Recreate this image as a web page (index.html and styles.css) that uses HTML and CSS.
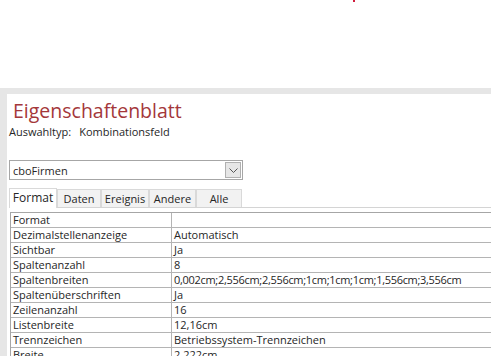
FILE: index.html
```html
<!DOCTYPE html>
<html lang="de">
<head>
<meta charset="utf-8">
<link rel="stylesheet" href="styles.css">
</head>
<body>
<div class="top"><span class="dot"></span></div>
<div class="sheet">
  <div class="panel">
    <h1 class="title">Eigenschaftenblatt</h1>
    <div class="subtitle"><span>Auswahltyp:</span><span>Kombinationsfeld</span></div>
    <div class="combo">
      <span class="combo-text">cboFirmen</span>
      <span class="combo-btn">
        <svg width="9" height="5" viewBox="0 0 9 5"><path d="M0.5 0.5 L4.5 4.5 L8.5 0.5" fill="none" stroke="#555" stroke-width="1"/></svg>
      </span>
    </div>
    <div class="tabs">
      <div class="tab active">Format</div>
      <div class="tab">Daten</div>
      <div class="tab">Ereignis</div>
      <div class="tab">Andere</div>
      <div class="tab">Alle</div>
    </div>
    <div class="grid">
      <div class="row"><div class="k">Format</div><div class="v"></div></div>
      <div class="row"><div class="k">Dezimalstellenanzeige</div><div class="v">Automatisch</div></div>
      <div class="row"><div class="k">Sichtbar</div><div class="v">Ja</div></div>
      <div class="row"><div class="k">Spaltenanzahl</div><div class="v">8</div></div>
      <div class="row"><div class="k">Spaltenbreiten</div><div class="v num">0,002cm;2,556cm;2,556cm;1cm;1cm;1cm;1,556cm;3,556cm</div></div>
      <div class="row"><div class="k">Spaltenüberschriften</div><div class="v">Ja</div></div>
      <div class="row"><div class="k">Zeilenanzahl</div><div class="v">16</div></div>
      <div class="row"><div class="k">Listenbreite</div><div class="v">12,16cm</div></div>
      <div class="row"><div class="k">Trennzeichen</div><div class="v">Betriebssystem-Trennzeichen</div></div>
      <div class="row"><div class="k">Breite</div><div class="v">2,222cm</div></div>
    </div>
  </div>
</div>
</body>
</html>
```
FILE: styles.css
```css
html, body {
  margin: 0;
  padding: 0;
  background: #ffffff;
  overflow: hidden;
  height: 356px;
}
body {
  font-family: "Open Sans", "Noto Sans", sans-serif;
  color: #262626;
}
.top {
  height: 88px;
  position: relative;
}
.dot {
  position: absolute;
  left: 353px;
  top: 0;
  width: 2px;
  height: 2px;
  background: #d01c3c;
}
.sheet {
  background: #e6e6e6;
  padding: 6px 0 0 7px;
}
.panel {
  background: #ffffff;
  padding: 0 0 0 2px;
  height: 400px;
}
.title {
  margin: 0;
  padding: 4px 0 0 4px;
  font-weight: normal;
  font-size: 19.5px;
  line-height: 26px;
  color: #a4373a;
}
.subtitle {
  font-size: 11px;
  line-height: 15px;
  display: flex;
  gap: 8px;
  color: #262626;
}
.combo {
  margin-top: 21px;
  width: 232px;
  height: 18px;
  border: 1px solid #a6a6a6;
  display: flex;
  align-items: center;
  justify-content: space-between;
}
.combo-text {
  font-size: 11px;
  padding-left: 3px;
}
.combo-btn {
  width: 16px;
  height: 16px;
  margin-right: 1px;
  background: #e6e6e6;
  border: 1px solid #b0b0b0;
  box-sizing: border-box;
  display: flex;
  align-items: center;
  justify-content: center;
}
.tabs {
  margin-top: 8px;
  display: flex;
  height: 19px;
  border-bottom: 1px solid #d4d4d4;
  width: 482px;
}
.tab {
  font-size: 11px;
  line-height: 18px;
  background: #f2f2f2;
  border: 1px solid #d9d9d9;
  border-bottom: none;
  text-align: center;
  margin-top: 1px;
  box-sizing: border-box;
}
.tab:nth-child(1) { width: 48px; }
.tab:nth-child(2) { width: 44px; }
.tab:nth-child(3) { width: 48px; }
.tab:nth-child(4) { width: 47px; }
.tab:nth-child(5) { width: 46px; }
.tab.active {
  background: #ffffff;
  margin-top: 0;
  margin-bottom: -1px;
  font-size: 12px;
}
.grid {
  margin-top: 4px;
  margin-left: 1px;
  border-top: 1px solid #a6a6a6;
  border-left: 1px solid #a6a6a6;
}
.row {
  display: flex;
  height: 15px;
  border-bottom: 1px solid #b4b4b4;
  box-sizing: border-box;
}
.k, .v {
  font-size: 11px;
  line-height: 14px;
  white-space: nowrap;
  padding-left: 2px;
}
.k {
  width: 158px;
  border-right: 1px solid #b4b4b4;
}
.v {
  flex: 1;
}
.v.num {
  letter-spacing: -0.3px;
}
```
